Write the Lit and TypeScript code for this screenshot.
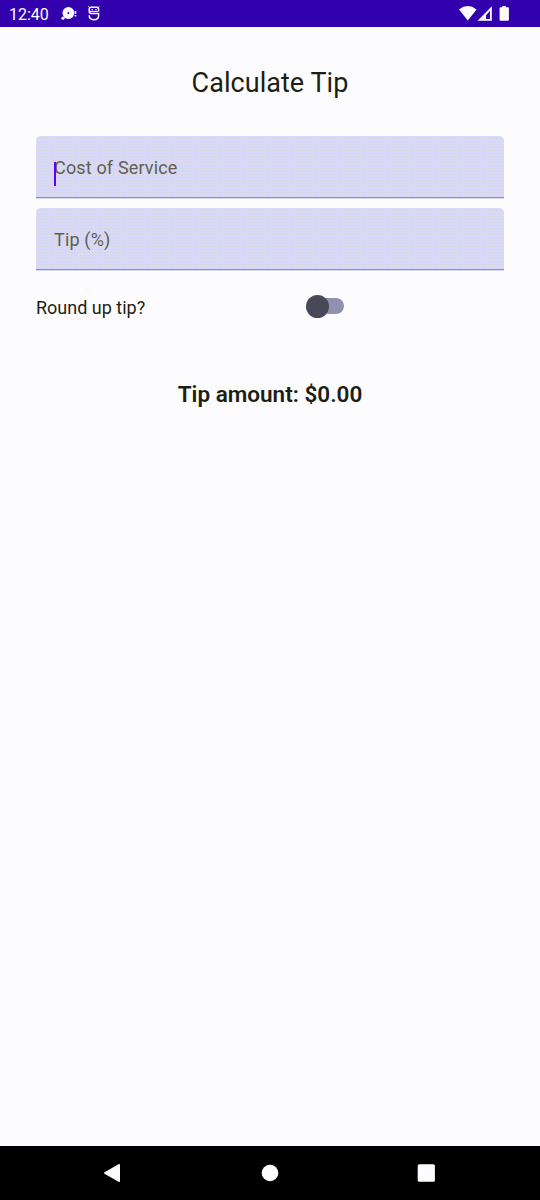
import { LitElement, html, css } from "lit";
import { customElement, property, state } from "lit/decorators.js";

@customElement("status-bar")
class StatusBar extends LitElement {
  static styles = css`
    :host {
      display: flex;
      align-items: center;
      box-sizing: border-box;
      height: 27px;
      flex: none;
      padding: 0 30px 0 9px;
      background-color: #3200ac;
      background-image: conic-gradient(at 1px 1px, transparent 75%, #4200a0 0),
        conic-gradient(at 1px 1px, transparent 75%, #2900b4 0);
      background-size: 3px 3px, 4px 4px;
      color: #fcfcff;
      font-size: 16px;
      line-height: 27px;
      letter-spacing: -0.05px;
    }
    .time { padding-top: 2px; width: 51px; }
    .left { display: block; }
    .right { display: block; margin-left: auto; }
  `;
  render() {
    return html`
      <span class="time">12:40</span>
      <svg class="left" width="44" height="27" viewBox="60 0 44 27">
        <circle cx="68.4" cy="13" r="5.9" fill="#fcfcff" />
        <circle cx="68.4" cy="13" r="1" fill="#3200ac" />
        <circle cx="63" cy="18.2" r="1.6" fill="#fcfcff" />
        <path d="M75.5 11v2.7M75.5 15v1.6" stroke="#fcfcff" stroke-width="1.6" />
        <g fill="none" stroke="#fcfcff" stroke-width="1.5">
          <path d="M98.6 11.4V9.3Q98.6 7.2 96.800 7.2H91Q89.200 7.2 89.200 9.3V11Q89.200 13.5 91.200 13.5H98.600V15.5Q98.600 19.7 93.900 19.7T89.200 15.300" />
          <path d="M90 11.400H98" stroke-width="1" />
          <path d="M91.500 9.600h1.300M95.300 9.600h1.300" stroke-width="1.300" />
        </g>
        <path d="M88.500 6.300l1.800 1.800M99.300 6.300l-1.800 1.800" stroke="#fcfcff" />
      </svg>
      <svg class="right" width="52" height="27" viewBox="458 0 52 27" fill="#fcfcff">
        <path d="M459 9.5Q467.7 2.6 476.6 9.5L467.8 20.5Z" />
        <path fill-rule="evenodd" d="M477.6 20.7L491.8 6.2V20.7ZM486 19h4V11l-4 4.2Z" />
        <path d="M502.3 6h3.6v1.3h2q1 0 1 1v11.5q0 1-1 1h-7.3q-1 0-1-1V8.3q0-1 1-1h1.7Z" />
      </svg>
    `;
  }
}

@customElement("filled-field")
class FilledField extends LitElement {
  @property() label = "";
  @property({ type: Boolean, reflect: true }) active = false;
  static styles = css`
    :host {
      display: flex;
      align-items: center;
      position: relative;
      box-sizing: border-box;
      height: 63px;
      padding: 0 18px;
      border-radius: 5px 5px 0 0;
      background-color: #d8d8fb;
      background-image: linear-gradient(#9090b4, #9090b4),
        conic-gradient(from 90deg at 2px 2px, #d8d8c0 25%, transparent 0);
      background-size: 100% 1px, 3px 3px;
      background-position: 0 61px, 0 0;
      background-repeat: no-repeat, repeat;
      color: #606050;
      font-size: 18px;
      line-height: 21px;
      letter-spacing: 0.16px;
    }
    .caret {
      position: absolute;
      left: 18px;
      top: 26px;
      width: 2px;
      height: 24px;
      background: #6200ff;
    }
  `;
  render() {
    return html`<span>${this.label}</span>${this.active ? html`<i class="caret"></i>` : ""}`;
  }
}

@customElement("nav-bar")
class NavBar extends LitElement {
  static styles = css`
    :host {
      display: flex;
      flex: none;
      height: 54px;
      background: #000;
      justify-content: center;
    }
    svg { display: block; }
  `;
  render() {
    return html`<svg width="540" height="54" fill="#fcfcff">
      <path d="M104.5 26.3L118.5 18.2Q120 17.6 120 19V35Q120 36.4 118.5 35.7L104.5 27.7Q103.4 27 104.5 26.3Z" />
      <circle cx="270" cy="27" r="8.3" />
      <rect x="417.7" y="18.3" width="17.2" height="17.4" rx="1.5" />
    </svg>`;
  }
}

@customElement("app-root")
class AppRoot extends LitElement {
  @state() private roundUp = false;
  static styles = css`
    :host {
      display: flex;
      flex-direction: column;
      height: 1200px;
      background: #fcfcff;
      color: #1e1e12;
      font-family: Roboto, sans-serif;
    }
    main { flex: 1; padding: 37px 36px 0; }
    h1 {
      margin: 0 0 34px;
      font-size: 27px;
      font-weight: 400;
      line-height: 38px;
      letter-spacing: 0.05px;
      text-align: center;
    }
    .fields { display: grid; gap: 9px; }
    .row {
      display: flex;
      align-items: center;
      height: 54px;
      margin-top: 8px;
      font-size: 18px;
      letter-spacing: 0;
    }
    .label { width: 269.5px; padding-top: 2px; }
    .switch {
      display: flex;
      align-items: center;
      width: 39px;
      height: 23px;
    }
    .track {
      flex: none;
      width: 33px;
      height: 16px;
      margin-left: 5px;
      border-radius: 8px;
      background: #9090b0;
    }
    .thumb {
      flex: none;
      width: 23px;
      height: 23px;
      margin-right: -22.5px;
      border-radius: 50%;
      background: #484858;
      z-index: 1;
    }
    .switch.on .thumb { transform: translateX(16px); }
    .amount {
      margin: 48px 0 0;
      font-size: 22.5px;
      font-weight: 600;
      line-height: 27px;
      letter-spacing: 0;
      text-align: center;
    }
  `;
  render() {
    return html`
      <status-bar></status-bar>
      <main>
        <h1>Calculate Tip</h1>
        <div class="fields">
          <filled-field label="Cost of Service" active></filled-field>
          <filled-field label="Tip (%)"></filled-field>
        </div>
        <div class="row">
          <span class="label">Round up tip?</span>
          <span class="switch ${this.roundUp ? "on" : ""}" role="switch"
            @click=${() => (this.roundUp = !this.roundUp)}
            ><i class="thumb"></i><i class="track"></i></span>
        </div>
        <p class="amount">Tip amount: $0.00</p>
      </main>
      <nav-bar></nav-bar>
    `;
  }
}
